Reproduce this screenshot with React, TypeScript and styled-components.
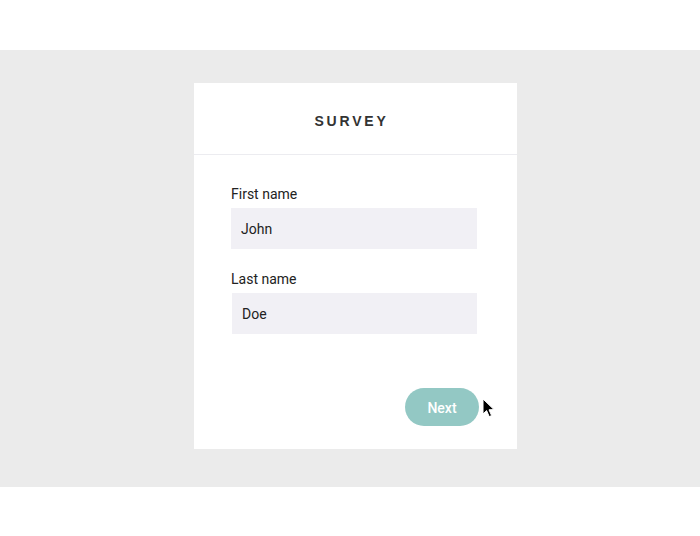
import React from "react";
import styled, { createGlobalStyle } from "styled-components";

const GlobalStyle = createGlobalStyle`
  html, body {
    margin: 0;
    padding: 0;
    background: #ffffff;
    font-family: Roboto, "Liberation Sans", Arial, sans-serif;
  }
`;

const Page = styled.div`
  width: 700px;
  height: 536px;
  padding-top: 50px;
  box-sizing: border-box;
  background: #ffffff;
`;

const Band = styled.div`
  height: 437px;
  background: #ebebeb;
  display: flex;
  justify-content: center;
  align-items: flex-start;
  padding-top: 33px;
  box-sizing: border-box;
`;

const Card = styled.div`
  position: relative;
  width: 323px;
  height: 366px;
  margin-left: 11px;
  background: #ffffff;
  display: flex;
  flex-direction: column;
`;

const Header = styled.div`
  height: 72px;
  padding-top: 4px;
  border-bottom: 1px solid #ececf0;
  display: flex;
  align-items: center;
  justify-content: center;
  box-sizing: border-box;
`;

const Title = styled.h1`
  margin: 0 0 0 -8px;
  font-family: "Liberation Sans", Arial, sans-serif;
  font-size: 14px;
  font-weight: 700;
  letter-spacing: 2.8px;
  color: #333333;
`;

const Form = styled.form`
  padding: 29px 40px 0 37px;
  display: flex;
  flex-direction: column;
  gap: 20px;
`;

const Field = styled.label`
  display: flex;
  flex-direction: column;
  gap: 4px;
`;

const Label = styled.span`
  font-size: 14px;
  line-height: 20px;
  color: #222222;
`;

const Input = styled.input<{ $shift?: number }>`
  height: 41px;
  box-sizing: border-box;
  border: none;
  outline: none;
  background: #f1f0f5;
  padding: 0 10px;
  margin-left: ${({ $shift }) => $shift ?? 0}px;
  font-family: Roboto, "Liberation Sans", Arial, sans-serif;
  font-size: 14px;
  color: #222222;
`;

const Actions = styled.div`
  display: flex;
  justify-content: flex-end;
  padding: 54px 38px 0 0;
`;

const NextButton = styled.button`
  width: 74px;
  height: 38px;
  padding: 2px 0 0;
  border: none;
  border-radius: 19px;
  background: #93c8c4;
  color: #ffffff;
  font-family: Roboto, "Liberation Sans", Arial, sans-serif;
  font-size: 14px;
  font-weight: 500;
  cursor: pointer;
`;

const Cursor = styled.svg`
  position: absolute;
  left: 288px;
  top: 315px;
`;

export default function App() {
  return (
    <>
      <GlobalStyle />
      <Page>
        <Band>
          <Card>
            <Header>
              <Title>SURVEY</Title>
            </Header>
            <Form onSubmit={(e) => e.preventDefault()}>
              <Field>
                <Label>First name</Label>
                <Input defaultValue="John" />
              </Field>
              <Field>
                <Label>Last name</Label>
                <Input defaultValue="Doe" $shift={1} />
              </Field>
            </Form>
            <Actions>
              <NextButton type="button">Next</NextButton>
            </Actions>
            <Cursor width="14" height="22" viewBox="0 0 14 22">
              <path
                d="M1 1 L1 16 L4.6 12.6 L7.2 18.6 L9.6 17.6 L7 11.8 L12 11.6 Z"
                fill="#000000"
                stroke="#ffffff"
                strokeWidth="1"
                strokeLinejoin="round"
              />
            </Cursor>
          </Card>
        </Band>
      </Page>
    </>
  );
}
